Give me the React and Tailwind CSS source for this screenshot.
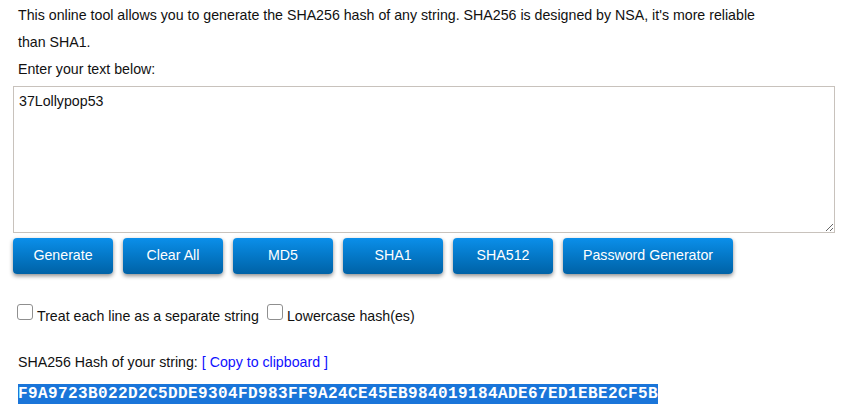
import React, { useState } from "react";

const buttons = [
  { label: "Generate", w: "w-[100px]" },
  { label: "Clear All", w: "w-[100px]" },
  { label: "MD5", w: "w-[100px]" },
  { label: "SHA1", w: "w-[100px]" },
  { label: "SHA512", w: "w-[100px]" },
  { label: "Password Generator", w: "w-[170px]" },
];

const Checkbox = ({ label, className }) => {
  const [checked, setChecked] = useState(false);
  return (
    <label className={`flex items-start cursor-pointer ${className || ""}`}>
      <span
        onClick={() => setChecked(!checked)}
        className="w-[16px] h-[16px] rounded-[3px] border border-[#8f8f8f] bg-white"
      />
      <span className="ml-[4px] mt-[4px] leading-[16px]">{label}</span>
    </label>
  );
};

const App = () => {
  const [text, setText] = useState("37Lollypop53");

  return (
    <div className="min-h-screen bg-white pt-[2px] pl-[13px] text-[14.2px] text-[#111] font-['Liberation_Sans',Arial,sans-serif]">
      <p className="pl-[5px] max-w-[765px] leading-[27px]">
        This online tool allows you to generate the SHA256 hash of any string.
        SHA256 is designed by NSA, it's more reliable than SHA1.
      </p>
      <p className="pl-[5px] leading-[27px]">Enter your text below:</p>

      <textarea
        value={text}
        onChange={(e) => setText(e.target.value)}
        className="mt-[3px] block w-[822px] h-[147px] border border-[#c8c2bc] bg-white px-[5px] py-[6px] text-[14.2px] leading-[16px] text-[#111] outline-none font-['Liberation_Sans',Arial,sans-serif]"
      />

      <div className="mt-[5px] flex gap-[10px]">
        {buttons.map((b) => (
          <button
            key={b.label}
            className={`${b.w} h-[36px] rounded-[4px] bg-gradient-to-b from-[#0b8fea] to-[#0062a6] text-white text-[14.2px] shadow-[0_2px_4px_rgba(0,0,0,0.45)] hover:from-[#0a80d2]`}
          >
            {b.label}
          </button>
        ))}
      </div>

      <div className="mt-[30px] pl-[4px] flex">
        <Checkbox label="Treat each line as a separate string" />
        <Checkbox label="Lowercase hash(es)" className="ml-[8px]" />
      </div>

      <div className="mt-[30px] pl-[5px] leading-[16px]">
        SHA256 Hash of your string:{" "}
        <a href="#" className="text-[#1010ff]">
          [ Copy to clipboard ]
        </a>
      </div>

      <div className="mt-[13px] pl-[5px]">
        <span className="inline-block bg-[#1a75d9] text-white font-bold text-[16px] leading-[20px] tracking-[0.4px] font-['Liberation_Mono','Courier_New',monospace]">
          F9A9723B022D2C5DDE9304FD983FF9A24CE45EB984019184ADE67ED1EBE2CF5B
        </span>
      </div>
    </div>
  );
};

export default App;
